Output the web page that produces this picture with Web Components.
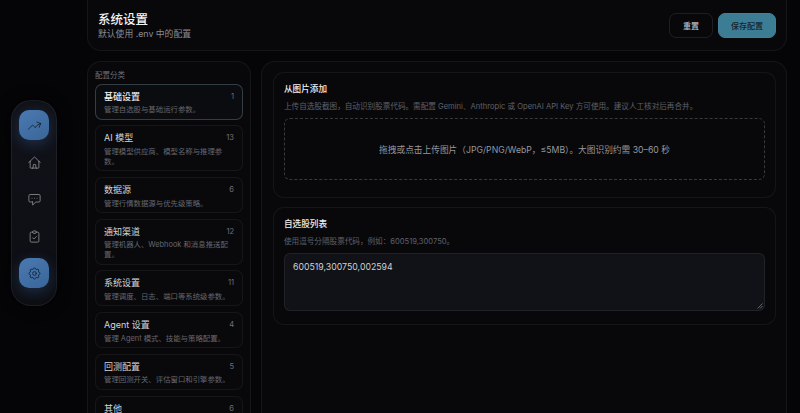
<!DOCTYPE html>
<html lang="zh-CN">
<head>
<meta charset="utf-8">
<title>系统设置</title>
<style>
    html, body {
        margin: 0;
        height: 100%;
        overflow: hidden;
        background: #050507;
        color: #e8e8ea;
        font-family: Inter, "Noto Sans CJK SC", sans-serif;
    }
</style>
</head>
<body>
<settings-page>
    <dock-bar slot="dock">
        <dock-button active icon="trend"></dock-button>
        <dock-button icon="home"></dock-button>
        <dock-button icon="chat"></dock-button>
        <dock-button icon="clip"></dock-button>
        <dock-button active icon="gear"></dock-button>
    </dock-bar>

    <page-header slot="header" title-text="系统设置" sub-text="默认使用 .env 中的配置"></page-header>

    <category-panel slot="nav">
        <category-item active name="基础设置" count="1">管理自选股与基础运行参数。</category-item>
        <category-item name="AI 模型" count="13">管理模型供应商、模型名称与推理参数。</category-item>
        <category-item name="数据源" count="6">管理行情数据源与优先级策略。</category-item>
        <category-item name="通知渠道" count="12">管理机器人、Webhook 和消息推送配置。</category-item>
        <category-item name="系统设置" count="11">管理调度、日志、端口等系统级参数。</category-item>
        <category-item name="Agent 设置" count="4">管理 Agent 模式、技能与策略配置。</category-item>
        <category-item name="回测配置" count="5">管理回测开关、评估窗口和引擎参数。</category-item>
        <category-item name="其他" count="6"></category-item>
    </category-panel>

    <content-panel slot="content">
        <config-card card-title="从图片添加" desc="上传自选股截图，自动识别股票代码。需配置 Gemini、Anthropic 或 OpenAI API Key 方可使用。建议人工核对后再合并。">
            <drop-zone>拖拽或点击上传图片（JPG/PNG/WebP，≤5MB）。大图识别约需 30–60 秒</drop-zone>
        </config-card>
        <config-card card-title="自选股列表" desc="使用逗号分隔股票代码，例如：600519,300750。">
            <code-area>600519,300750,002594</code-area>
        </config-card>
    </content-panel>
</settings-page>

<script>
const ICONS = {
    trend: '<path d="M2.25 18L9 11.25l4.306 4.306a11.95 11.95 0 015.814-5.518l2.74-1.22m0 0l-5.94-2.28m5.94 2.28l-2.28 5.941"/>',
    home: '<path d="M3 12l2-2m0 0l7-7 7 7M5 10v10a1 1 0 001 1h3m10-11l2 2m-2-2v10a1 1 0 01-1 1h-3m-6 0a1 1 0 001-1v-4a1 1 0 011-1h2a1 1 0 011 1v4a1 1 0 001 1m-6 0h6"/>',
    chat: '<path d="M8 10h.01M12 10h.01M16 10h.01M9 16H5a2 2 0 01-2-2V6a2 2 0 012-2h14a2 2 0 012 2v8a2 2 0 01-2 2h-5l-5 5v-5z"/>',
    clip: '<path d="M9 5H7a2 2 0 00-2 2v12a2 2 0 002 2h10a2 2 0 002-2V7a2 2 0 00-2-2h-2M9 5a2 2 0 002 2h2a2 2 0 002-2M9 5a2 2 0 012-2h2a2 2 0 012 2m-6 9l2 2 4-4"/>',
    gear: '<path d="M10.325 4.317c.426-1.756 2.924-1.756 3.35 0a1.724 1.724 0 002.573 1.066c1.543-.94 3.31.826 2.37 2.37a1.724 1.724 0 001.065 2.572c1.756.426 1.756 2.924 0 3.35a1.724 1.724 0 00-1.066 2.573c.94 1.543-.826 3.31-2.37 2.37a1.724 1.724 0 00-2.572 1.065c-.426 1.756-2.924 1.756-3.35 0a1.724 1.724 0 00-2.573-1.066c-1.543.94-3.31-.826-2.37-2.37a1.724 1.724 0 00-1.065-2.572c-1.756-.426-1.756-2.924 0-3.35a1.724 1.724 0 001.066-2.573c-.94-1.543.826-3.31 2.37-2.37.996.608 2.296.07 2.572-1.065z"/><circle cx="12" cy="12" r="3"/>'
};

class SettingsPage extends HTMLElement {
    constructor() {
        super();
        this.attachShadow({ mode: 'open' });
        this.shadowRoot.innerHTML = `
            <style>
                :host {
                    display: flex;
                    width: 800px;
                    height: 413px;
                    overflow: hidden;
                }
                .dock-col {
                    flex: none;
                    width: 87px;
                    padding: 100px 0 0 11px;
                    box-sizing: border-box;
                }
                .main {
                    flex: none;
                    width: 700px;
                    display: flex;
                    flex-direction: column;
                    gap: 10px;
                }
                .columns {
                    display: flex;
                    flex: none;
                    gap: 10px;
                    height: 400px;
                }
            </style>
            <div class="dock-col"><slot name="dock"></slot></div>
            <div class="main">
                <slot name="header"></slot>
                <div class="columns">
                    <slot name="nav"></slot>
                    <slot name="content"></slot>
                </div>
            </div>
        `;
    }
}

class DockBar extends HTMLElement {
    constructor() {
        super();
        this.attachShadow({ mode: 'open' });
        this.shadowRoot.innerHTML = `
            <style>
                :host {
                    display: flex;
                    flex-direction: column;
                    align-items: center;
                    justify-content: space-between;
                    width: 46px;
                    height: 206px;
                    padding: 9px 0 17px;
                    box-sizing: border-box;
                    border-radius: 20px;
                    background: linear-gradient(180deg, #111219 0%, #0d0e13 100%);
                    border: 1px solid rgba(255,255,255,0.06);
                    box-shadow: 0 0 14px rgba(0,0,0,0.6);
                }
            </style>
            <slot></slot>
        `;
    }
}

class DockButton extends HTMLElement {
    constructor() {
        super();
        this.attachShadow({ mode: 'open' });
        const icon = ICONS[this.getAttribute('icon')];
        this.shadowRoot.innerHTML = `
            <style>
                :host {
                    display: flex;
                    align-items: center;
                    justify-content: center;
                    width: 30px;
                    height: 30px;
                    border-radius: 10px;
                    color: #85878f;
                }
                :host([active]) {
                    background: linear-gradient(145deg, #4a79b2 0%, #3a6698 100%);
                    box-shadow: 0 4px 14px rgba(65,120,190,0.3);
                    color: #17202e;
                }
                svg {
                    width: 15px;
                    height: 15px;
                    fill: none;
                    stroke: currentColor;
                    stroke-width: 1.4;
                    stroke-linecap: round;
                    stroke-linejoin: round;
                }
            </style>
            <svg viewBox="0 0 24 24">${icon}</svg>
        `;
    }
}

class PageHeader extends HTMLElement {
    constructor() {
        super();
        this.attachShadow({ mode: 'open' });
        this.shadowRoot.innerHTML = `
            <style>
                :host {
                    display: flex;
                    flex: none;
                    align-items: center;
                    justify-content: space-between;
                    height: 63px;
                    margin-top: -12px;
                    padding: 12px 10px 0 10px;
                    box-sizing: border-box;
                    background: #08080b;
                    border: 1px solid rgba(255,255,255,0.06);
                    border-radius: 14px;
                }
                h1 {
                    margin: 0;
                    font-size: 12.5px;
                    line-height: 15px;
                    font-weight: 500;
                    color: #f2f2f4;
                }
                p {
                    margin: 1px 0 0;
                    font-size: 8.8px;
                    line-height: 11px;
                    color: #8a8b92;
                }
                .actions {
                    display: flex;
                    gap: 5px;
                }
                button {
                    height: 25px;
                    padding: 0;
                    font: 500 8px Inter, "Noto Sans CJK SC", sans-serif;
                    border-radius: 7px;
                }
                .ghost {
                    width: 44px;
                    background: transparent;
                    border: 1px solid rgba(255,255,255,0.09);
                    color: #c0c1c6;
                }
                .save {
                    width: 58px;
                    background: #3c7d94;
                    border: 1px solid #437f96;
                    color: #14232b;
                }
            </style>
            <div>
                <h1>${this.getAttribute('title-text')}</h1>
                <p>${this.getAttribute('sub-text')}</p>
            </div>
            <div class="actions">
                <button class="ghost">重置</button>
                <button class="save">保存配置</button>
            </div>
        `;
    }
}

class CategoryPanel extends HTMLElement {
    constructor() {
        super();
        this.attachShadow({ mode: 'open' });
        this.shadowRoot.innerHTML = `
            <style>
                :host {
                    display: flex;
                    flex-direction: column;
                    flex: none;
                    width: 164px;
                    gap: 5.7px;
                    padding: 9px 7px 0;
                    box-sizing: border-box;
                    background: #08080b;
                    border: 1px solid rgba(255,255,255,0.06);
                    border-radius: 14px;
                }
                .label {
                    font-size: 7.5px;
                    line-height: 10px;
                    margin-bottom: -3px;
                    color: #6d6e75;
                }
            </style>
            <div class="label">配置分类</div>
            <slot></slot>
        `;
    }
}

class CategoryItem extends HTMLElement {
    constructor() {
        super();
        this.attachShadow({ mode: 'open' });
        this.shadowRoot.innerHTML = `
            <style>
                :host {
                    display: block;
                    flex: none;
                    padding: 5px 8px 3.5px;
                    border: 1px solid rgba(255,255,255,0.055);
                    border-radius: 7px;
                    background: #09090c;
                }
                :host([active]) {
                    border-color: rgba(160,190,205,0.28);
                    background: #0b0c0f;
                }
                .top {
                    display: flex;
                    justify-content: space-between;
                    font-size: 9px;
                    line-height: 13px;
                    font-weight: 400;
                    color: #d5d5d9;
                }
                :host([active]) .top { color: #f2f2f4; font-weight: 500; }
                .count {
                    font-size: 7.5px;
                    font-weight: 400;
                    color: #6f7076;
                }
                .desc {
                    margin-top: 2.5px;
                    font-size: 7.4px;
                    line-height: 10px;
                    min-height: 10px;
                    color: #66676e;
                }
            </style>
            <div class="top">
                <span>${this.getAttribute('name')}</span>
                <span class="count">${this.getAttribute('count')}</span>
            </div>
            <div class="desc"><slot></slot></div>
        `;
    }
}

class ContentPanel extends HTMLElement {
    constructor() {
        super();
        this.attachShadow({ mode: 'open' });
        this.shadowRoot.innerHTML = `
            <style>
                :host {
                    display: flex;
                    flex-direction: column;
                    flex: none;
                    width: 526px;
                    gap: 9px;
                    padding: 10px 10px 0 11px;
                    box-sizing: border-box;
                    background: #08080b;
                    border: 1px solid rgba(255,255,255,0.06);
                    border-radius: 14px;
                }
            </style>
            <slot></slot>
        `;
    }
}

class ConfigCard extends HTMLElement {
    constructor() {
        super();
        this.attachShadow({ mode: 'open' });
        this.shadowRoot.innerHTML = `
            <style>
                :host {
                    display: block;
                    padding: 10px 10px 13px;
                    background: #08080b;
                    border: 1px solid rgba(255,255,255,0.055);
                    border-radius: 11px;
                }
                h2 {
                    margin: 0;
                    font-size: 8.6px;
                    line-height: 13px;
                    font-weight: 500;
                    color: #f0f0f2;
                }
                p {
                    margin: 6px 0 6px;
                    font-size: 7.6px;
                    line-height: 10px;
                    color: #5f6067;
                    white-space: nowrap;
                }
            </style>
            <h2>${this.getAttribute('card-title')}</h2>
            <p>${this.getAttribute('desc')}</p>
            <slot></slot>
        `;
    }
}

class DropZone extends HTMLElement {
    constructor() {
        super();
        this.attachShadow({ mode: 'open' });
        this.shadowRoot.innerHTML = `
            <style>
                :host {
                    display: flex;
                    align-items: center;
                    justify-content: center;
                    height: 62px;
                    margin-bottom: 4px;
                    box-sizing: border-box;
                    border: 1px dashed rgba(255,255,255,0.2);
                    border-radius: 6px;
                    font-size: 8.7px;
                    color: #96979d;
                }
            </style>
            <slot></slot>
        `;
    }
}

class CodeArea extends HTMLElement {
    constructor() {
        super();
        this.attachShadow({ mode: 'open' });
        this.shadowRoot.innerHTML = `
            <style>
                :host {
                    display: block;
                    position: relative;
                    height: 58px;
                    padding: 7px 8px;
                    box-sizing: border-box;
                    background: #111217;
                    border: 1px solid rgba(255,255,255,0.07);
                    border-radius: 6px;
                    font-size: 8.75px;
                    line-height: 13px;
                    color: #d0d0d4;
                }
                /* resize grip, sits over the corner */
                svg {
                    position: absolute;
                    right: 1px;
                    bottom: 1px;
                    width: 6px;
                    height: 6px;
                    stroke: #77787e;
                    stroke-width: 0.8;
                }
            </style>
            <slot></slot>
            <svg viewBox="0 0 6 6"><path d="M0.5 5.5L5.5 0.5M3 5.5L5.5 3"/></svg>
        `;
    }
}

customElements.define('settings-page', SettingsPage);
customElements.define('dock-bar', DockBar);
customElements.define('dock-button', DockButton);
customElements.define('page-header', PageHeader);
customElements.define('category-panel', CategoryPanel);
customElements.define('category-item', CategoryItem);
customElements.define('content-panel', ContentPanel);
customElements.define('config-card', ConfigCard);
customElements.define('drop-zone', DropZone);
customElements.define('code-area', CodeArea);
</script>
</body>
</html>
